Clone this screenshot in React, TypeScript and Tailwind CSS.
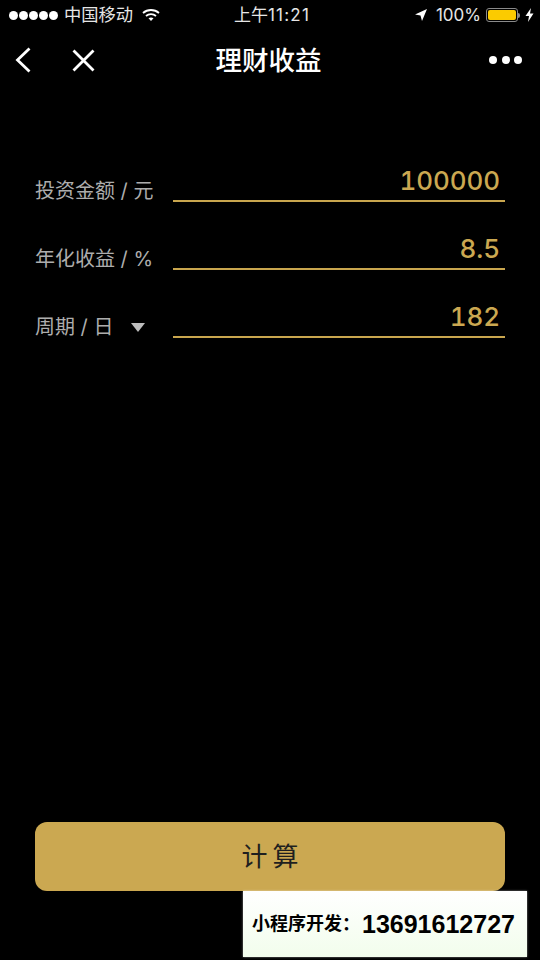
const SANS = "font-['Inter','Noto_Sans_CJK_SC',sans-serif]";

function Field({ label, value, arrow }: { label: string; value: string; arrow?: boolean }) {
  return (
    <div className="flex h-[68px] items-end">
      <div className="flex h-[22px] w-[138px] items-center text-[20px] leading-none text-[#adadad]">
        <span className="whitespace-pre">{label}</span>
        {arrow && <span className="ml-[18px] h-0 w-0 border-x-[7px] border-t-[9px] border-x-transparent border-t-[#bdbdbd]" />}
      </div>
      <div className="flex h-[40px] flex-1 items-center justify-end border-b-[2px] border-[#c9a64e] pb-[2px] pr-[5px] text-[26px] font-medium tabular-nums tracking-[-0.100px] text-[#cba851]">
        {value}
      </div>
    </div>
  );
}

export default function App() {
  return (
    <div className={`relative flex h-[960px] w-[540px] flex-col overflow-hidden bg-black text-white ${SANS}`}>
      {/* status bar */}
      <div className="relative flex h-[30px] items-center justify-between pl-[9px] pr-[6px] text-[17px] leading-none text-[#e6e6e6]">
        <div className="flex items-center">
          <div className="flex gap-[1px]">
            {[0, 1, 2, 3, 4].map((i) => (
              <span key={i} className="h-[9px] w-[9px] rounded-full bg-white" />
            ))}
          </div>
          <span className="ml-[6px] text-[17.250px]">中国移动</span>
          <svg className="ml-[9px]" width="18" height="14" viewBox="0 0 18 14" fill="none" stroke="#fff" strokeWidth="1.8">
            <path d="M1 5c4.500-4 11.500-4 16 0" />
            <path d="M4 8c2.800-2.500 7.200-2.500 10 0" />
            <path d="M9 13l-2.500-2.800c1.500-1 3.500-1 5 0z" fill="#fff" stroke="none" />
          </svg>
        </div>
        <span className="absolute left-[234px]">
          上午<span className="tracking-[1.200px]">11:21</span>
        </span>
        <div className="flex items-center">
          <svg width="14" height="14" viewBox="0 0 14 14" fill="#fff">
            <path d="M13 1L1 6.500l5.500 1L8 13z" />
          </svg>
          <span className="ml-[8px]">100%</span>
          <div className="ml-[5px] flex h-[14px] w-[32px] items-center rounded-[3px] border border-[#8a8a8a] p-[1px]">
            <div className="h-full w-full rounded-[2px] bg-[#fbcb00]" />
          </div>
          <span className="h-[5px] w-[2px] rounded-r-sm bg-[#8a8a8a]" />
          <svg className="ml-[5px]" width="9" height="14" viewBox="0 0 9 14" fill="#fff">
            <path d="M6 0L0.500 8H4L3 14l5.500-8.500H5z" />
          </svg>
        </div>
      </div>

      {/* nav bar */}
      <div className="relative flex h-[60px] items-center justify-center pr-[3px]">
        <svg className="absolute left-[14px] top-[16px]" width="18" height="28" viewBox="0 0 18 28" fill="none" stroke="#fff" strokeWidth="2.800">
          <path d="M15.500 2.500L3.500 14l12 11.500" />
        </svg>
        <svg className="absolute left-[72px] top-[19px]" width="23" height="23" viewBox="0 0 23 23" fill="none" stroke="#fff" strokeWidth="2.800">
          <path d="M1.500 1.500l20 20M21.500 1.500l-20 20" />
        </svg>
        <span className="text-[26.500px] font-medium leading-none">理财收益</span>
        <div className="absolute left-[489px] top-[26px] flex gap-[4.500px]">
          {[0, 1, 2].map((i) => (
            <span key={i} className="h-[8px] w-[8px] rounded-full bg-white" />
          ))}
        </div>
      </div>

      {/* form */}
      <div className="mt-[44px] flex flex-col px-[35px]">
        <Field label="投资金额 / 元" value="100000" />
        <Field label="年化收益 / %" value="8.5" />
        <Field label="周期 / 日" value="182" arrow />
      </div>

      <button className="mx-[35px] mb-[69px] mt-auto flex h-[69px] items-center justify-center rounded-[12px] bg-[#cba851] pl-[5px] text-[26px] tracking-[5px] text-[#1f1f1f]">
        计算
      </button>

      {/* watermark */}
      <div className="absolute left-[243px] top-[891px] flex h-[66px] w-[284px] items-center gap-[2px] bg-gradient-to-b from-white to-[#f2fdec] pl-[9px] font-bold leading-none text-black shadow-[0_0_2px_#fff8]">
        <span className="text-[18px]">小程序开发：</span>
        <span className="font-['Liberation_Sans',sans-serif] text-[25px]">13691612727</span>
      </div>
    </div>
  );
}
